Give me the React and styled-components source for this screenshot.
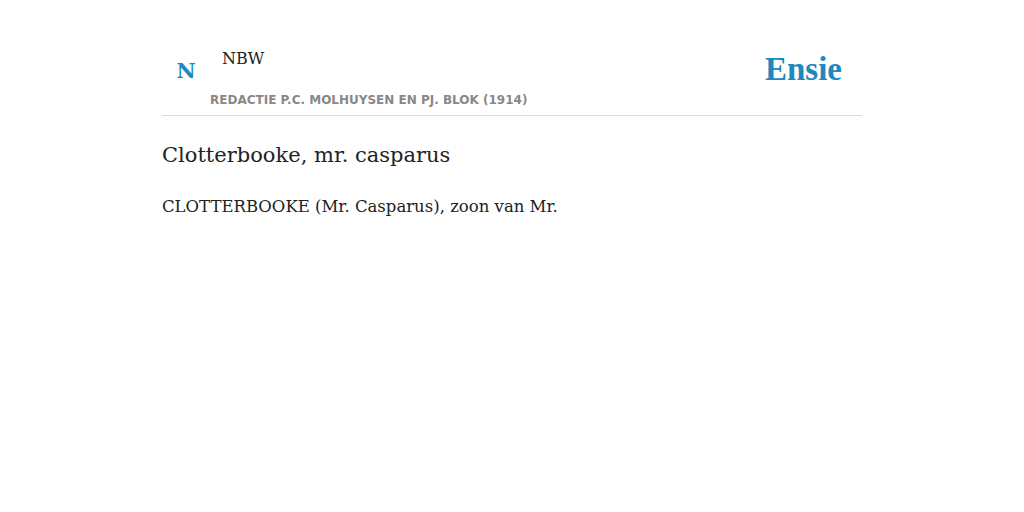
import React from 'react';
import styled, { createGlobalStyle } from 'styled-components';

const Global = createGlobalStyle`
  body {
    margin: 0;
    background: #fff;
    font-family: "DejaVu Serif", serif;
    color: #222;
  }
`;

const Page = styled.div`
  width: 700px;
  margin: 0 auto;
  padding-top: 40px;
`;

const Header = styled.header`
  display: flex;
  justify-content: space-between;
  align-items: flex-start;
  border-bottom: 1px solid #ddd;
  padding-bottom: 7px;
`;

const Brand = styled.div`
  display: flex;
  flex-direction: column;
`;

const BrandTop = styled.div`
  display: flex;
  align-items: flex-start;
`;

const Logo = styled.div`
  width: 48px;
  margin-top: 19px;
  text-align: center;
  font-weight: bold;
  font-size: 21px;
  line-height: 24px;
  color: #1e88c0;
`;

const Title = styled.div`
  margin-left: 12px;
  margin-top: 9px;
  font-size: 16px;
  line-height: 20px;
  color: #222;
`;

const Subtitle = styled.div`
  margin-left: 48px;
  margin-top: 9px;
  font-family: "DejaVu Sans", sans-serif;
  font-weight: bold;
  font-size: 12px;
  line-height: 16px;
  color: #888;
`;

const Site = styled.div`
  margin-top: 9px;
  margin-right: 20px;
  font-family: "Liberation Serif", serif;
  font-weight: bold;
  font-size: 33px;
  line-height: 40px;
  color: #1e88c0;
`;

const Heading = styled.h1`
  margin: 25px 0 0;
  font-weight: normal;
  font-size: 21px;
  line-height: 28px;
  color: #222;
`;

const Body = styled.p`
  margin: 26px 0 0;
  font-size: 16.5px;
  line-height: 24px;
  color: #222;
`;

export default function App() {
  return (
    <>
      <Global />
      <Page>
        <Header>
          <Brand>
            <BrandTop>
              <Logo>N</Logo>
              <Title>NBW</Title>
            </BrandTop>
            <Subtitle>REDACTIE P.C. MOLHUYSEN EN PJ. BLOK (1914)</Subtitle>
          </Brand>
          <Site>Ensie</Site>
        </Header>
        <Heading>Clotterbooke, mr. casparus</Heading>
        <Body>CLOTTERBOOKE (Mr. Casparus), zoon van Mr.</Body>
      </Page>
    </>
  );
}
